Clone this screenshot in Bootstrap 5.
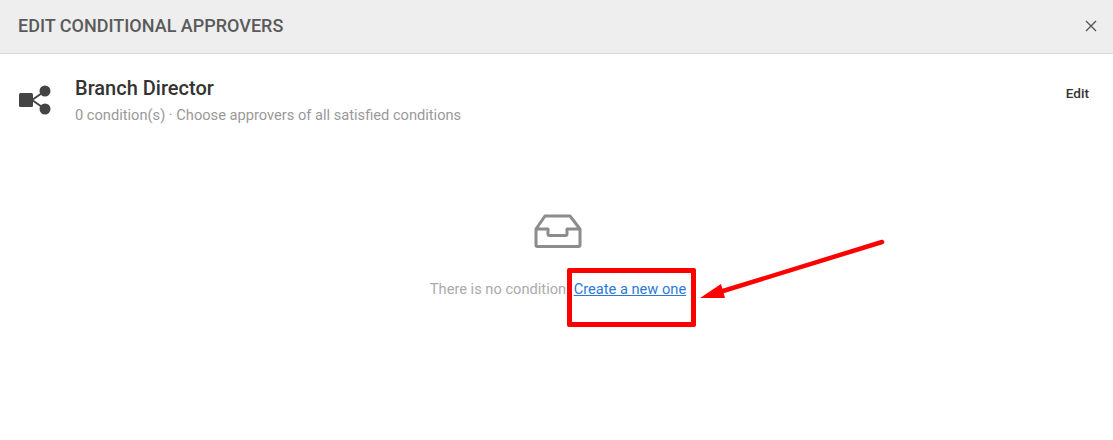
<!DOCTYPE html>
<html lang="en">
<head>
  <meta charset="UTF-8">
  <title>Edit conditional approvers</title>
  <meta name="viewport" content="width=device-width, initial-scale=1">
  <link href="https://cdn.jsdelivr.net/npm/bootstrap@5.3.0/dist/css/bootstrap.min.css" rel="stylesheet">
  <style>
    html, body { height: 440px; overflow: hidden; }
    body { font-family: Roboto, "Liberation Sans", sans-serif; background: #fff; position: relative; }
    .dlg-head { height: 54px; background: #eee; border-bottom: 1px solid #d8d8d8; padding: 0 16px 2px 18px; }
    .dlg-title { font-size: 18px; font-weight: 500; color: #5a5a5a; margin: 0; }
    .dlg-close { background: none; border: 0; padding: 0; line-height: 0; }
    .rule-row { padding: 23px 24px 0 18px; }
    .rule-icon { width: 33px; margin-top: 8px; margin-right: 24px; }
    .rule-name { font-size: 20px; font-weight: 500; color: #333; line-height: 23px; }
    .rule-sub { font-size: 14.65px; color: #999; line-height: 17px; margin-top: 7px; }
    .rule-edit { font-size: 13.6px; font-weight: 500; color: #333; margin-top: 6px; }
    .empty-box { margin-top: 90px; padding-left: 3px; }
    .empty-text { font-size: 14.65px; color: #aaa; line-height: 17px; margin-top: 31px; }
    .empty-text a { color: #2a7ad5; }
    .mark-box { position: absolute; left: 567px; top: 268px; width: 129px; height: 59px; border: 5px solid #f00; border-radius: 2px; }
    .mark-arrow { position: absolute; left: 695px; top: 235px; }
  </style>
</head>
<body>

<!-- Encabezado -->
<div class="dlg-head d-flex align-items-center justify-content-between">
  <h1 class="dlg-title">EDIT CONDITIONAL APPROVERS</h1>
  <button class="dlg-close" type="button" aria-label="Close">
    <svg width="12" height="12" viewBox="0 0 12 12"><path d="M1 1l10 10M11 1L1 11" stroke="#555" stroke-width="1.4" fill="none"/></svg>
  </button>
</div>

<!-- Fila de la regla -->
<div class="rule-row d-flex align-items-start">
  <svg class="rule-icon flex-shrink-0" width="33" height="32" viewBox="0 0 33 32">
    <rect x="1" y="8" width="14" height="14" rx="1.5" fill="#444"/>
    <path d="M14 15L27 6M14 15L27 24" stroke="#444" stroke-width="2" fill="none"/>
    <circle cx="27" cy="6" r="5.5" fill="#444"/>
    <circle cx="27" cy="24" r="5.5" fill="#444"/>
  </svg>
  <div class="flex-grow-1">
    <div class="rule-name">Branch Director</div>
    <div class="rule-sub">0 condition(s) · Choose approvers of all satisfied conditions</div>
  </div>
  <div class="rule-edit">Edit</div>
</div>

<!-- Estado vacío -->
<div class="empty-box d-flex flex-column align-items-center">
  <svg width="50" height="36" viewBox="0 0 50 36">
    <path d="M12 2H37L47 15V31a1.5 1.5 0 0 1-1.5 1.5H4.5A1.5 1.5 0 0 1 3 31V15z M3 15H15v5a1.5 1.5 0 0 0 1.5 1.5h16a1.5 1.5 0 0 0 1.5-1.5v-5H47" fill="none" stroke="#8c8c8c" stroke-width="3" stroke-linejoin="round"/>
  </svg>
  <div class="empty-text">There is no condition. <a href="#">Create a new one</a></div>
</div>

<!-- Anotaciones -->
<div class="mark-box"></div>
<svg class="mark-arrow" width="195" height="70" viewBox="0 0 195 70">
  <path d="M187 7L28 56" stroke="#f00" stroke-width="4.5" stroke-linecap="round" fill="none"/>
  <path d="M5 63L26 49L30 63z" fill="#f00"/>
</svg>

<script src="https://cdn.jsdelivr.net/npm/bootstrap@5.3.0/dist/js/bootstrap.bundle.min.js"></script>
</body>
</html>
